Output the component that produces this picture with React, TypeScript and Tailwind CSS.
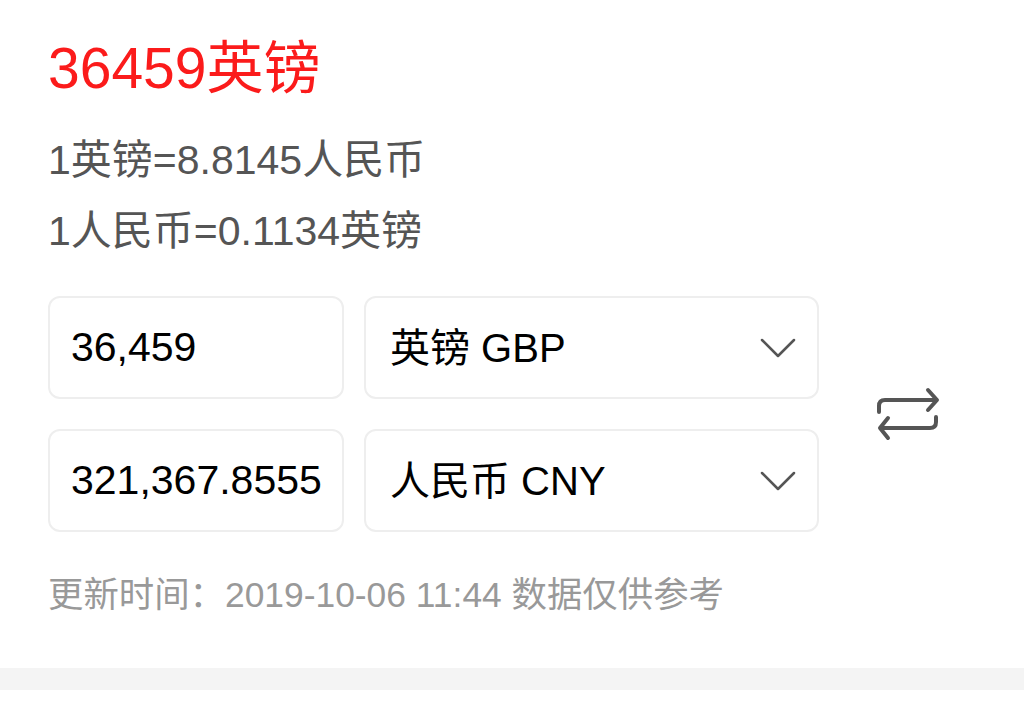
import React from 'react';

const font = { fontFamily: '"Liberation Sans", "Noto Sans CJK SC", sans-serif' };

function Chevron() {
  return (
    <svg width="36" height="20" viewBox="0 0 36 20" fill="none">
      <path d="M2 2 L18 18 L34 2" stroke="#555" strokeWidth="2.5" strokeLinecap="round" strokeLinejoin="round" />
    </svg>
  );
}

function SwapIcon() {
  return (
    <svg width="70" height="60" viewBox="0 0 70 60" fill="none">
      <path d="M7 28 V22 Q7 16 13 16 H64" stroke="#555" strokeWidth="4" strokeLinecap="round" strokeLinejoin="round" />
      <path d="M56 6 L65 16 L56 26" stroke="#555" strokeWidth="4" strokeLinecap="round" strokeLinejoin="round" />
      <path d="M64 33 V38 Q64 44 58 44 H9" stroke="#555" strokeWidth="4" strokeLinecap="round" strokeLinejoin="round" />
      <path d="M16 34 L8 44 L16 54" stroke="#555" strokeWidth="4" strokeLinecap="round" strokeLinejoin="round" />
    </svg>
  );
}

function Row({ amount, currency }: { amount: string; currency: string }) {
  return (
    <div className="flex gap-[20px]">
      <div className="w-[296px] h-[103px] flex items-center pl-[21px] border-2 border-[#eeeeee] rounded-[12px] text-[41px] text-black leading-none">
        {amount}
      </div>
      <div className="w-[455px] h-[103px] flex items-center justify-between pl-[24px] pr-[21px] border-2 border-[#eeeeee] rounded-[12px] text-[40px] text-black leading-none">
        <span>{currency}</span>
        <Chevron />
      </div>
    </div>
  );
}

export default function App() {
  return (
    <div className="w-[1024px] h-[707px] bg-white overflow-hidden" style={font}>
      <div className="pl-[48px]">
        <div className="pt-[40px] text-[57px] leading-[56px] text-[#fb1b1b]">36459英镑</div>
        <div className="mt-[44px] text-[41px] leading-[40px] text-[#555555]">1英镑=8.8145人民币</div>
        <div className="mt-[31px] text-[41px] leading-[40px] text-[#555555]">1人民币=0.1134英镑</div>

        <div className="mt-[45px] flex items-center">
          <div className="flex flex-col gap-[30px]">
            <Row amount="36,459" currency="英镑 GBP" />
            <Row amount="321,367.8555" currency="人民币 CNY" />
          </div>
          <div className="ml-[53px]">
            <SwapIcon />
          </div>
        </div>

        <div className="mt-[46px] text-[35.4px] leading-[35px] text-[#999999]">更新时间：2019-10-06 11:44 数据仅供参考</div>
      </div>
      <div className="mt-[55px] h-[22px] bg-[#f4f4f4]" />
    </div>
  );
}
